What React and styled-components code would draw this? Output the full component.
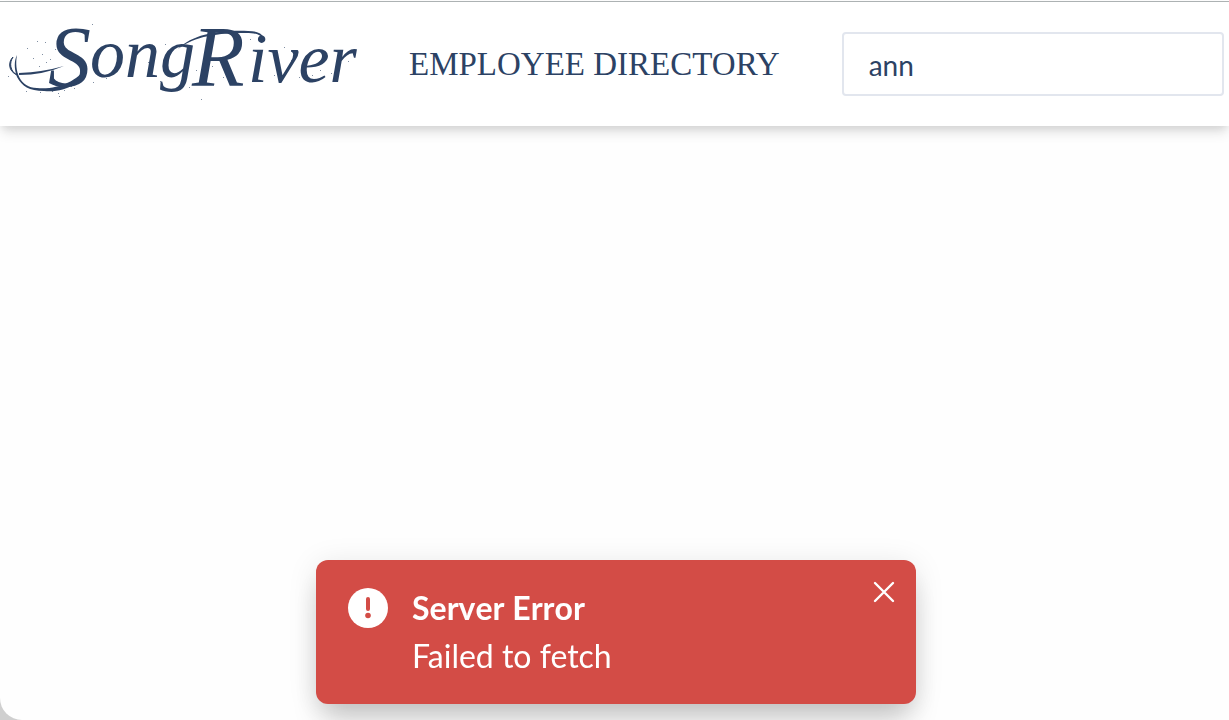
import React, { useState } from "react";
import styled, { createGlobalStyle } from "styled-components";

const navy = "#2c4264";

const GlobalStyle = createGlobalStyle`
  *, *::before, *::after { box-sizing: border-box; }
  body {
    margin: 0;
    background: #cfcfcf;
    color: ${navy};
    font-family: Lato, "Liberation Sans", sans-serif;
  }
`;

const Page = styled.div`
  min-height: 100vh;
  padding-top: 1px;
  background: #fefefe;
  border-bottom-left-radius: 22px;
`;

const Header = styled.header`
  display: flex;
  align-items: center;
  padding: 0 5px 0 8px;
  min-height: 125px;
  border-top: 1px solid #adb2b3;
  background: #ffffff;
  box-shadow: 0 8px 12px -2px rgba(0, 0, 0, 0.12), 0 4px 8px -2px rgba(0, 0, 0, 0.08);
`;

const LogoLink = styled.a`
  display: block;
  flex: none;
  line-height: 0;
`;

const LogoText = styled.text`
  font-family: "Liberation Serif", serif;
  font-style: italic;
  font-size: ${(p) => (p.$capital ? 86 : 70)}px;
  fill: ${navy};
`;

const Title = styled.h1`
  flex: none;
  margin: 0 0 0 49px;
  font-family: "Liberation Serif", serif;
  font-size: 33px;
  font-weight: 400;
  line-height: 40px;
  text-transform: uppercase;
  white-space: nowrap;
`;

const Search = styled.input`
  flex: 1;
  min-width: 0;
  height: 64px;
  margin-left: 62px;
  padding: 2px 25px 0;
  border: 2px solid #e2e6ee;
  border-radius: 4px;
  background: #ffffff;
  color: inherit;
  font-family: inherit;
  font-size: 28px;
  outline: none;
`;

const ToastArea = styled.div`
  position: fixed;
  inset: auto 0 0 0;
  display: flex;
  justify-content: center;
  padding: 0 13px 16px 16px;
`;

const Toast = styled.div`
  display: flex;
  align-items: flex-start;
  gap: 24px;
  width: 600px;
  padding: 24px 16px 24px 32px;
  border-radius: 12px;
  background: #d34c46;
  color: #ffffff;
  box-shadow: 0 20px 30px -6px rgba(0, 0, 0, 0.2), 0 4px 30px rgba(0, 0, 0, 0.1);
`;

const AlertIcon = styled.svg`
  flex: none;
  margin-top: 4px;
`;

const ToastBody = styled.div`
  flex: 1;
  font-size: 32px;
  line-height: 48px;
`;

const ToastTitle = styled.div`
  font-weight: 700;
  font-kerning: none;
`;

const CloseButton = styled.button`
  display: flex;
  align-items: center;
  justify-content: center;
  width: 32px;
  height: 32px;
  margin-top: -8px;
  padding: 0;
  border: 0;
  background: transparent;
  color: inherit;
  cursor: pointer;
`;

const speckles = [
  [19, 32, 1], [29, 25, 1], [34, 38, 1], [42, 43, 1], [25, 42, 1], [38, 46, 1],
  [31, 50, 1], [47, 33, 1], [37, 26, 1], [0, 60, 1], [3, 52, 1], [16, 69, 1],
  [18, 75, 1], [32, 76, 1], [39, 74, 2], [44, 75, 1], [50, 77, 1], [56, 74, 1],
  [63, 70, 1], [66, 72, 1], [51, 80, 1], [85, 66, 1], [92, 33, 1], [98, 62, 1],
  [122, 60, 1], [140, 46, 1], [152, 65, 1], [173, 66, 1], [181, 71, 1],
  [188, 54, 1], [193, 62, 1], [199, 56, 1], [204, 50, 1], [193, 83, 1],
  [215, 61, 1], [231, 21, 1], [242, 23, 1], [266, 59, 1], [276, 31, 1],
  [283, 44, 1], [291, 61, 1], [304, 59, 1], [312, 54, 1], [323, 57, 1],
  [331, 52, 1], [328, 61, 1], [340, 45, 1], [157, 28, 1], [84, 8, 1],
];

function Logo() {
  return (
    <svg width="352" height="118" viewBox="0 -11 352 118" role="img" aria-label="SongRiver">
      <path
        d="M9 39C6 55 12 72 29 72C49 74 70 65 77 52C74 67 58 77 36 75C21 75 14 70 9 61C6 53 6 45 9 39Z"
        fill={navy}
      />
      <path d="M5 41C1 47 2 55 9 59C0 55 0 46 5 41Z" stroke={navy} fill={navy} />
      <path d="M11 57Q35 56 56 50Q35 59 11 59Z" fill={navy} />
      <path d="M170 33C185 18 212 14 240 15C250 15 256 18 257 25C253 18 247 17 238 17C210 17 187 20 170 33Z" fill={navy} />
      {speckles.map(([x, y, s]) => (
        <rect key={`${x}-${y}`} x={x} y={y} width={s} height="1" fill={navy} opacity="0.6" />
      ))}
      <LogoText $capital x="40" y="70">S</LogoText>
      <LogoText x="82" y="61">ong</LogoText>
      <LogoText $capital x="184" y="70">R</LogoText>
      <LogoText x="240" y="66">iver</LogoText>
    </svg>
  );
}

export default function App() {
  const [query, setQuery] = useState("ann");
  const [open, setOpen] = useState(true);

  return (
    <Page>
      <GlobalStyle />
      <Header>
        <LogoLink href="/" aria-label="SongRiver home">
          <Logo />
        </LogoLink>
        <Title>Employee Directory</Title>
        <Search
          type="text"
          aria-label="Search employees"
          value={query}
          onChange={(e) => setQuery(e.target.value)}
        />
      </Header>
      {open && (
        <ToastArea>
          <Toast role="alert">
            <AlertIcon width="40" height="40" viewBox="0 0 40 40" aria-hidden="true">
              <circle cx="20" cy="20" r="20" fill="#ffffff" />
              <line x1="20" y1="11" x2="20" y2="21" stroke="#d34c46" strokeWidth="4" strokeLinecap="round" />
              <circle cx="20" cy="27.500" r="2.800" fill="#d34c46" />
            </AlertIcon>
            <ToastBody>
              <ToastTitle>Server Error</ToastTitle>
              <div>Failed to fetch</div>
            </ToastBody>
            <CloseButton type="button" aria-label="Close" onClick={() => setOpen(false)}>
              <svg width="22" height="22" viewBox="0 0 22 22" aria-hidden="true">
                <path d="M2 2L20 20M20 2L2 20" stroke="currentColor" strokeWidth="2.400" strokeLinecap="round" />
              </svg>
            </CloseButton>
          </Toast>
        </ToastArea>
      )}
    </Page>
  );
}
